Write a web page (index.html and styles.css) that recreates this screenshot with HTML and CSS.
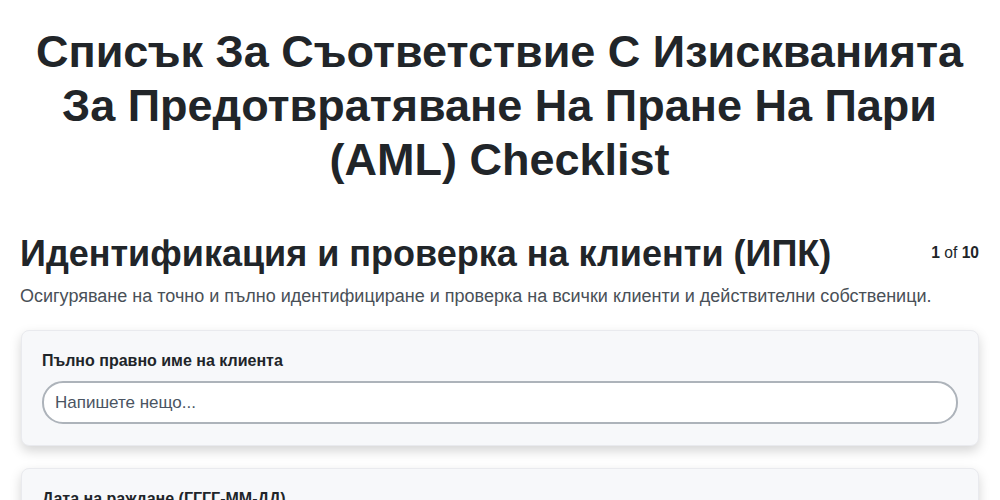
FILE: index.html
```html
<!DOCTYPE html>
<html lang="bg">
<head>
  <meta charset="UTF-8" />
  <title>AML Checklist</title>
  <link rel="stylesheet" href="styles.css">
</head>
<body>

  <h1 class="title">Списък За Съответствие С Изискванията За Предотвратяване На Пране На Пари (AML) Checklist</h1>

  <div class="section-head">
    <h2>Идентификация и проверка на клиенти (ИПК)</h2>
    <div class="counter"><b>1</b> of <b>10</b></div>
  </div>
  <p class="section-desc">Осигуряване на точно и пълно идентифициране и проверка на всички клиенти и действителни собственици.</p>

  <div class="card">
    <label class="field-label" for="name">Пълно правно име на клиента</label>
    <input type="text" id="name" class="field-input" placeholder="Напишете нещо..." />
  </div>

  <div class="card">
    <label class="field-label" for="dob">Дата на раждане (ГГГГ-ММ-ДД)</label>
    <input type="text" id="dob" class="field-input" placeholder="ГГГГ-ММ-ДД" />
  </div>

</body>
</html>
```

FILE: styles.css
```css
body {
  margin: 0;
  padding: 25px 21px 20px 20px;
  background-color: #fff;
  color: #212529;
  font-family: 'Liberation Sans', Arial, sans-serif;
}

.title {
  max-width: 960px;
  margin: 0 auto 45px;
  font-size: 45px;
  line-height: 54px;
  font-weight: bold;
  text-align: center;
}

.section-head {
  display: flex;
  justify-content: space-between;
  align-items: flex-start;
}

.section-head h2 {
  margin: 0;
  font-size: 36px;
  line-height: 44px;
  font-weight: bold;
}

.counter {
  font-size: 15.6px;
  padding-top: 12px;
  color: #212529;
}

.section-desc {
  margin: 10px 0 23px;
  font-size: 18px;
  line-height: 21px;
  color: #495057;
}

.card {
  background-color: #f7f8fa;
  border: 1px solid #e9eaee;
  border-radius: 8px;
  box-shadow: 0 5px 12px rgba(0, 0, 0, 0.17);
  padding: 20px 20px 21px;
  margin: 0 0 22px 1px;
}

.field-label {
  display: block;
  font-size: 16px;
  line-height: 19px;
  font-weight: bold;
  margin-bottom: 11px;
}

.field-input {
  box-sizing: border-box;
  width: 100%;
  height: 43px;
  padding: 0 11px;
  font-family: inherit;
  font-size: 17px;
  color: #212529;
  background-color: #fff;
  border: 2px solid #adb3ba;
  border-radius: 21px;
}

.field-input::placeholder {
  color: #4a5462;
}
```
